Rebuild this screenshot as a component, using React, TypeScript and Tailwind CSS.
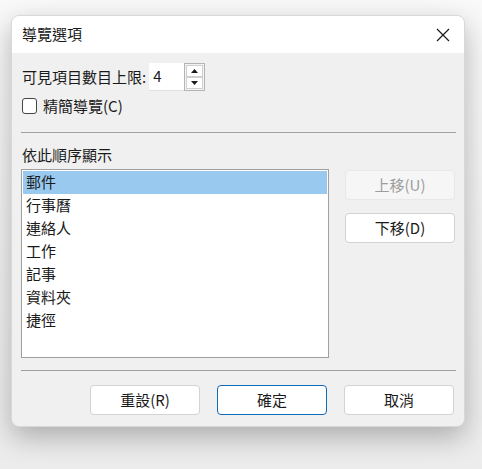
import { useState } from "react";

const ITEMS = ["郵件", "行事曆", "連絡人", "工作", "記事", "資料夾", "捷徑"];

const font = { fontFamily: '"Noto Sans CJK TC", "Noto Sans", sans-serif' };

function Btn({ children, primary, disabled }: { children: React.ReactNode; primary?: boolean; disabled?: boolean }) {
  return (
    <button
      type="button"
      disabled={disabled}
      className={
        "flex h-[30px] w-[110px] items-center justify-center rounded-[4px] border text-[15px] " +
        (disabled
          ? "border-[#e8e8e8] bg-[#f6f6f6] text-[#9d9d9d]"
          : primary
          ? "border-[#0f6cbd] bg-white text-[#1a1a1a]"
          : "border-[#d3d3d3] bg-white text-[#1a1a1a]")
      }
    >
      {children}
    </button>
  );
}

export default function App() {
  const [sel, setSel] = useState(0);
  const [compact, setCompact] = useState(false);

  return (
    <div
      className="flex h-[469px] w-[482px] items-start bg-gradient-to-b from-[#f9f9f9] to-[#ececec] pl-[11px] pt-[15px]"
      style={font}
    >
      <div className="flex h-[412px] w-[454px] flex-col overflow-hidden rounded-[8px] border border-[#d8d8d8] bg-[#f0f0f0] shadow-[0_10px_28px_rgba(0,0,0,0.28)]">
        {/* title bar */}
        <div className="flex h-[37px] items-center justify-between bg-white pl-[10px] pr-[14px]">
          <span className="text-[15px] text-[#1a1a1a]">導覽選項</span>
          <svg width="14" height="14" viewBox="0 0 14 14" className="text-[#1a1a1a]">
            <path d="M1 1L13 13M13 1L1 13" stroke="currentColor" strokeWidth="1.2" />
          </svg>
        </div>

        <div className="flex flex-col px-[9px]">
          {/* max visible */}
          <div className="mt-[10px] flex h-[28px] items-center pl-[1px]">
            <span className="text-[15px] text-[#1a1a1a]">可見項目數目上限:</span>
            <div className="ml-[3px] flex h-[28px] items-stretch">
              <div className="flex w-[35px] items-center border-b border-[#e0e0e0] bg-white pl-[4px] text-[15px] text-[#1a1a1a]">
                4
              </div>
              <div className="flex w-[21px] flex-col border border-[#b4b4b4] bg-[#f3f3f3] p-[1px]">
                <div className="flex flex-1 items-center justify-center border border-[#d0d0d0] bg-white">
                  <svg width="7" height="4" viewBox="0 0 7 4"><path d="M0 4L3.5 0L7 4Z" fill="#1a1a1a" /></svg>
                </div>
                <div className="flex flex-1 items-center justify-center border border-[#d0d0d0] bg-white">
                  <svg width="7" height="4" viewBox="0 0 7 4"><path d="M0 0L3.5 4L7 0Z" fill="#1a1a1a" /></svg>
                </div>
              </div>
            </div>
          </div>

          {/* compact checkbox */}
          <label className="mt-[6px] flex h-[18px] items-center gap-[6px] pl-[1px]">
            <span
              onClick={() => setCompact((v) => !v)}
              className="flex h-[16px] w-[15px] items-center justify-center rounded-[3px] border border-[#444] bg-white text-[11px]"
            >
              {compact ? "✓" : ""}
            </span>
            <span className="text-[15px] text-[#1a1a1a]">精簡導覽(C)</span>
          </label>

          <div className="mt-[17px] h-px w-[435px] bg-[#a0a0a0]" />

          <span className="mt-[12px] pl-[1px] text-[15px] leading-[20px] text-[#1a1a1a]">依此順序顯示</span>

          <div className="mt-[4px] flex gap-[16px]">
            <div className="h-[189px] w-[309px] border border-[#a0a0a0] bg-white p-[1px]">
              {ITEMS.map((it, i) => (
                <div
                  key={it}
                  onClick={() => setSel(i)}
                  className={
                    "flex h-[23px] items-center pl-[3px] text-[15px] text-[#1a1a1a] " +
                    (i === sel ? "bg-[#99c9ef]" : "")
                  }
                >
                  {it}
                </div>
              ))}
            </div>
            <div className="flex flex-col gap-[13px] pt-[1px]">
              <Btn disabled>上移(U)</Btn>
              <Btn>下移(D)</Btn>
            </div>
          </div>

          <div className="mt-[12px] h-px w-[435px] bg-[#a0a0a0]" />

          <div className="mt-[14px] flex justify-end gap-[17px] pr-[1px]">
            <Btn>重設(R)</Btn>
            <Btn primary>確定</Btn>
            <Btn>取消</Btn>
          </div>
        </div>
      </div>
    </div>
  );
}
